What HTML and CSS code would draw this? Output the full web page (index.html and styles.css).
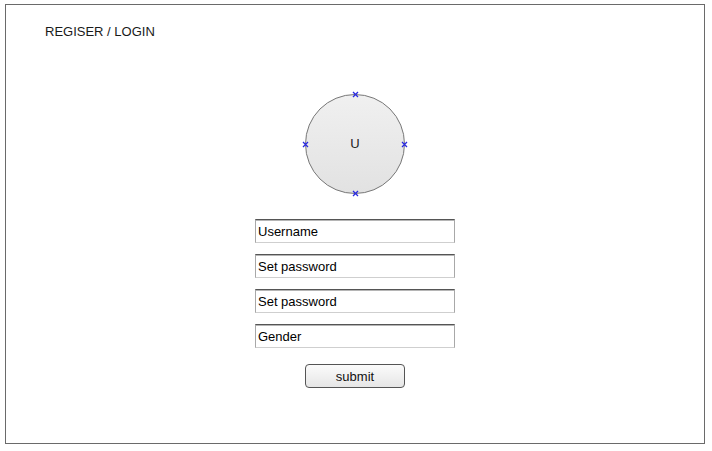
FILE: index.html
```html
<!DOCTYPE html>
<html>
<head>
<meta charset="utf-8">
<link rel="stylesheet" href="styles.css">
</head>
<body>
<div class="frame">
  <div class="title">REGISER / LOGIN</div>
  <div class="form">
    <div class="avatar">
      <span class="letter">U</span>
      <svg class="mark m-top" width="7" height="7" viewBox="0 0 7 7"><path d="M1 1L6 6M6 1L1 6" stroke="#2a2ae0" stroke-width="1.3"/></svg>
      <svg class="mark m-left" width="7" height="7" viewBox="0 0 7 7"><path d="M1 1L6 6M6 1L1 6" stroke="#2a2ae0" stroke-width="1.3"/></svg>
      <svg class="mark m-right" width="7" height="7" viewBox="0 0 7 7"><path d="M1 1L6 6M6 1L1 6" stroke="#2a2ae0" stroke-width="1.3"/></svg>
      <svg class="mark m-bottom" width="7" height="7" viewBox="0 0 7 7"><path d="M1 1L6 6M6 1L1 6" stroke="#2a2ae0" stroke-width="1.3"/></svg>
    </div>
    <div class="fields">
      <div class="field">Username</div>
      <div class="field">Set password</div>
      <div class="field">Set password</div>
      <div class="field">Gender</div>
    </div>
    <div class="button">submit</div>
  </div>
</div>
</body>
</html>
```
FILE: styles.css
```css
html, body {
  margin: 0;
  padding: 0;
  background: #fff;
}
body {
  font-family: "Liberation Sans", Arial, sans-serif;
  color: #111;
}
.frame {
  box-sizing: border-box;
  width: 700px;
  height: 440px;
  margin: 4px 0 0 5px;
  border: 1px solid #6a6a6a;
  padding: 19px 0 0 39px;
}
.title {
  font-size: 13px;
  line-height: 15px;
  color: #1a1a1a;
}
.form {
  display: flex;
  flex-direction: column;
  align-items: center;
  margin-left: -39px;
  padding-top: 55px;
}
.avatar {
  position: relative;
  box-sizing: border-box;
  width: 100px;
  height: 100px;
  border-radius: 50%;
  border: 1px solid #777;
  background: linear-gradient(#f0f0f0, #e2e2e2);
  display: flex;
  align-items: center;
  justify-content: center;
  padding-bottom: 2px;
}
.letter {
  font-size: 13px;
  line-height: 15px;
  color: #222;
}
.mark {
  position: absolute;
}
.m-top { top: -4px; left: 46px; }
.m-bottom { bottom: -4px; left: 46px; }
.m-left { left: -4px; top: 46px; }
.m-right { right: -4px; top: 46px; }
.fields {
  display: flex;
  flex-direction: column;
  gap: 11px;
  margin-top: 25px;
}
.field {
  box-sizing: border-box;
  width: 200px;
  height: 24px;
  border-top: 1px solid #555;
  border-left: 1px solid #a8a8a8;
  border-right: 1px solid #a8a8a8;
  border-bottom: 1px solid #cfcfcf;
  box-shadow: inset 0 1px 0 #b5b5b5;
  padding: 4px 0 0 2px;
  font-size: 13px;
  line-height: 15px;
  color: #000;
}
.button {
  box-sizing: border-box;
  width: 100px;
  height: 24px;
  margin-top: 16px;
  border: 1px solid #555;
  border-radius: 4px;
  background: linear-gradient(#fbfbfb, #e6e6e6);
  font-size: 13px;
  line-height: 22px;
  padding-top: 1px;
  text-align: center;
  color: #111;
}
```
